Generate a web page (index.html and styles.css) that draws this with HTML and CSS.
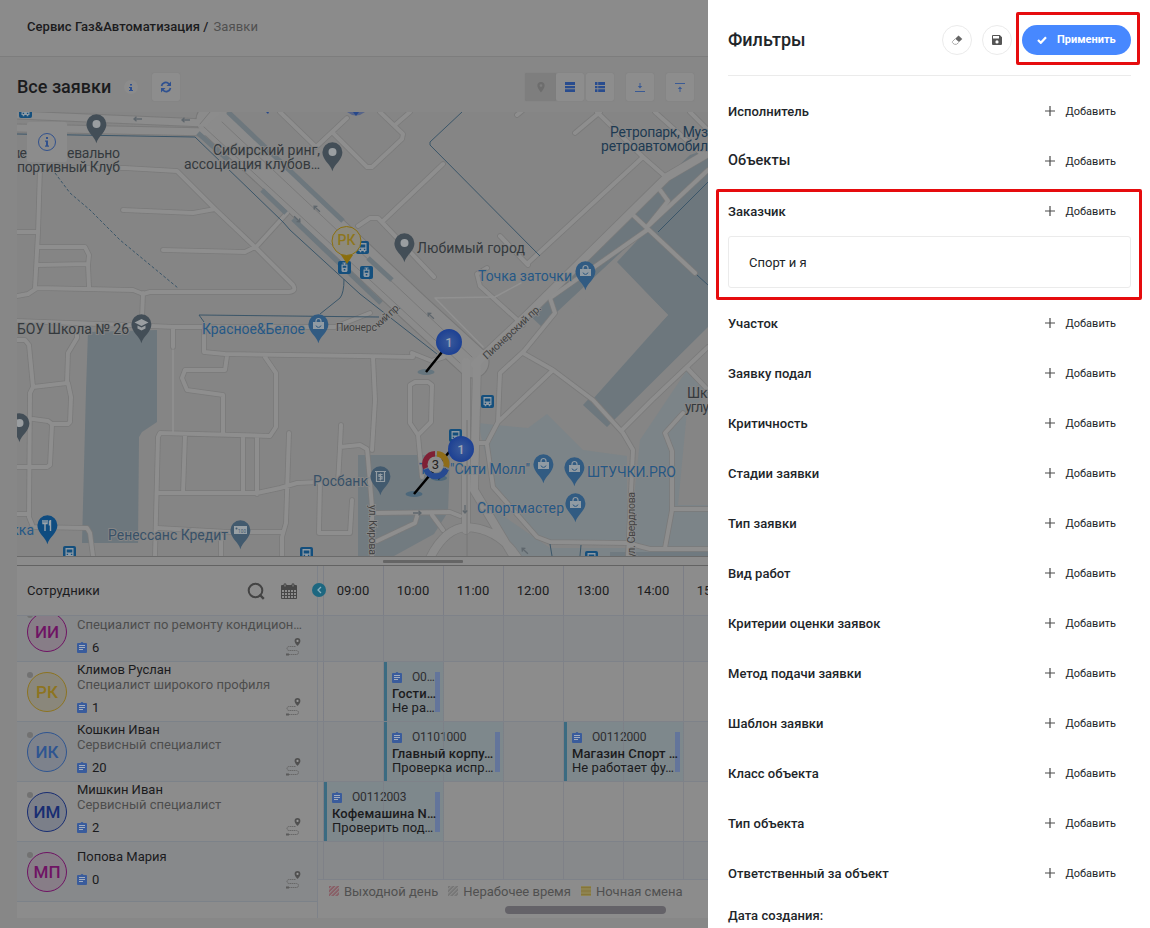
FILE: index.html
```html
<!DOCTYPE html>
<html lang="ru">
<head>
<meta charset="utf-8">
<title>Заявки</title>
<link rel="stylesheet" href="styles.css">
</head>
<body>
<svg class="defs" width="0" height="0">
  <defs>
    <symbol id="i-task" viewBox="0 0 10 11"><path fill="#3a5c9c" d="M1 1h2.6a1.5 1.5 0 0 1 2.8 0H9a1 1 0 0 1 1 1v8a1 1 0 0 1-1 1H1a1 1 0 0 1-1-1V2a1 1 0 0 1 1-1z"/><path stroke="#a3adbd" d="M2 3.5h6M2 5.5h6M2 7.5h4"/></symbol>
    <symbol id="i-route" viewBox="0 0 16 18"><path fill="none" stroke="#676767" stroke-dasharray="1.6 .5" d="M9.5 8.5H3a2 2 0 0 0 0 4h7.500a2 2 0 0 1 0 4H1.500"/><path fill="#505050" d="M11.500 0a2.900 2.900 0 0 1 2.900 2.900c0 2-2.900 5-2.900 5s-2.900-3-2.900-5A2.900 2.900 0 0 1 11.500 0z"/><circle cx="11.500" cy="2.900" r="1.100" fill="#999"/><rect y="15.500" width="3" height="2" fill="#5b5b5b"/></symbol>
    <symbol id="i-plus" viewBox="0 0 10 10"><path stroke="#4b4b4b" stroke-width="1.200" d="M5 0v10M0 5h10"/></symbol>
    <g id="pin"><path transform="translate(.4 .2)" d="M0 19C-1.500 12-10 8-10 0a10 10 0 0 1 20 0C10 8 1.500 12 0 19z"/></g>
    <g id="bag" fill="#919ba3"><path d="M-5-2H6v7H-5z"/><path d="M-2-1v-2a2.500 2.500 0 0 1 5 0v2" fill="none" stroke="#919ba3" stroke-width="1.200"/><path d="M-2 1.500a2.600 2.600 0 0 0 5 0" fill="none" stroke="#315b82"/></g>
    <g id="stop"><rect x="-6.500" y="-6.500" width="13" height="13" rx="2" fill="#144f7d"/><path fill="#8e9aa4" d="M-4-4.500h8v8h-1.200v1.200H1.200V3.500h-2.400v1.200h-1.600V3.500H-4z"/><path fill="#144f7d" d="M-2.800-3h5.600v3h-5.600zM-2.800 1.200h1.400v1.200h-1.400zM1.400 1.200h1.400v1.200H1.400z"/></g>
    <g id="tram"><rect x="-6.500" y="-6.500" width="13" height="13" rx="2" fill="#144f7d"/><path fill="#8e9aa4" d="M-2-5h4v1H.5v1H3v6.500L2 4.500H-2L-3 3.500V-3h2.500v-1H-2z"/><path fill="#144f7d" d="M-1.800-1.800h3.600v2h-3.600zM-.8 1.500h1.600v1.400H-.8z"/></g>
    <g id="arrow"><path fill="none" stroke="#5f676d" stroke-width="1.300" d="M-4 0h8M-1.500-2.200L-4 0l2.500 2.200"/></g>
    <radialGradient id="ball"><stop offset="0" stop-color="#3a5a9c"/><stop offset=".6" stop-color="#294b95"/><stop offset="1" stop-color="#1c4094"/></radialGradient>
    <g id="roads">
      <path d="M17 232h21M40 168l-2 65-3 55M40 168h85l52 3 38 38 40 38 38 38q4 6-4 7H150l-7 2-10-4-96-2-9 6-11 2M123 210l70 3 22-4M163 250l82 2 12-6 30-33M38 247h47l4 8-1 10 1 22M38 265l50-1M17 321l110 4 48 2h160l35-14M143 293l-1 26M173 327v20M204 328v24l21 2 135 2 53 1-1-4 20 8 12-4M227 356l-2 14h-40l-3 8 5 12 36 5v38M265 357l11 16v54l-6 9-110-3-2 4-3 119M185 435l-2 58M243 437v56M257 437v57M158 493h99l23-5 17-5 23-1-1 51h31l2-33M289 433l-3 90-4 14v19M158 528l70 4h54M221 536v20M341 425l-1 22-2 36M340 447l20-2 7 4 1 10 4 48v49"/>
      <path d="M17 340h8l4 5 4 42-3 6-1 124 4 10 54 1 3 5 3 23M33 387l34-4 1-30 9-15v-10M68 383l3 14-1 25-2 2H52l-4-3-15-2M52 425l-2 40-3 2H17M17 514h12"/>
      <path d="M347 118l-31 29-36-35M333 133l17 17 17 17h5l30-28 1-5-23-22M395 125l15-13M443 164l-60 57M358 226l12-8h8l56 59M500 236l28 29M487 268l-10 6 3 12 43 39M528 263L643 157l-46-45M575 133l25-21M643 157l24 21M655 112l48 43M690 112l18 18M517 115l6-5M660 190l8 11-21 26 61-57M647 230l-97 68 5 15-31 38-24 22-2 49-11 21h-8M523 353l30 17 40 30 30 33 10 17-5 106M553 370l-55 52M708 347l-56 53-30 30M687 368l21 22M683 413l-18 20 7 18v59l-7 38M672 509h36M487 445l6 42 44 50 13 5 77 1 23 6h58M633 215l62 58"/>
      <path d="M373 357l2 43-3 50M410 423v-38l5-3h13l4 3-1 37-13 13-8-12M418 435l4 42M377 513l73-1 10 4M418 513l-3 10-38 18M432 515l11 15"/>
    </g>
    <g id="avenues">
      <path d="M708 153l-41 24-142 140-50 47M466 362v168M477 364l-3 126 40 67M430 558q15-30 37-31 32 2 50 30"/>
    </g>
    <pattern id="h-red" width="2.800" height="2.800" patternUnits="userSpaceOnUse" patternTransform="rotate(45)"><path d="M1 0v4" stroke="#88505a" stroke-width="1.400"/></pattern>
    <pattern id="h-grey" width="2.800" height="2.800" patternUnits="userSpaceOnUse" patternTransform="rotate(45)"><path d="M1 0v4" stroke="#6f6f6f" stroke-width="1.400"/></pattern>
  </defs>
</svg>

<div class="app">
  <main class="page">
    <header class="crumbs"><b>Сервис Газ&amp;Автоматизация /</b><span>Заявки</span></header>

    <div class="titlebar">
      <h1>Все заявки</h1>
      <span class="hint"><svg width="4" height="7"><path fill="#2c4f91" d="M1 0h2v1.600H1zM0 3h3v3h1v1H0V6h1V4H0z"/></svg></span>
      <span class="btn btn-refresh"><svg width="12" height="12" viewBox="0 0 12 12"><path fill="none" stroke="#2f5190" stroke-width="1.700" d="M1.500 5A4.300 4.300 0 0 1 9 3M10.500 7A4.300 4.300 0 0 1 3 9"/><path fill="#2f5190" d="M11 .5v4.500H6.500zM1 11.500V7h4.500z"/></svg></span>
      <div class="tools">
        <span class="btn btn-off"><svg width="8" height="11" viewBox="0 0 8 11"><path fill="#6d6d6d" fill-rule="evenodd" d="M4 0a3.600 3.600 0 0 1 3.600 3.600C7.600 6.500 4 10.500 4 10.500S.4 6.500.4 3.600A3.600 3.600 0 0 1 4 0zm0 2.200a1.400 1.400 0 1 0 0 2.800 1.400 1.400 0 0 0 0-2.800z"/></svg></span>
        <span class="btn"><svg width="10" height="10"><path fill="#294c8e" d="M0 0h10v3H0zM0 4h10v2.300H0zM0 7.300h10V10H0z"/></svg></span>
        <span class="btn btn-gap"><svg width="10" height="10"><path fill="#294c8e" d="M0 0h2.500v3H0zM3.200 0H10v3H3.200zM0 4h2.500v2.300H0zM3.200 4H10v2.300H3.200zM0 7.300h2.500V10H0zM3.200 7.300H10V10H3.200z"/></svg></span>
        <span class="btn btn-far"><svg width="10" height="9"><path fill="#3a5a95" d="M0 8h10v1H0zM4.500 0h1v3h1.700L5 5.600 2.800 3h1.700z"/></svg></span>
        <span class="btn btn-far"><svg width="10" height="9"><path fill="#3a5a95" d="M0 0h10v1H0zM4.500 9h1V6h1.700L5 3.400 2.800 6h1.700z"/></svg></span>
      </div>
    </div>

    <div class="map">
      <svg width="691" height="444" viewBox="17 112 691 444">
        <rect x="17" y="112" width="691" height="444" fill="#858585"/>
        <g fill="#6d777d">
          <path d="M88 332l69-2v92l-15 10-3 5-1 106H82l4-153z"/>
          <path d="M690 155l18-6v22l-150 140-16 16-17-16 15-15z"/>
          <path d="M617 262l30-32 61-57v154L607 427l-24-22 85-90z"/>
          <path d="M358 455h92l-2 57-14 22-40 22h-36z" fill="#727b80"/>
        </g>
        <path fill="#858585" d="M617 263l51 52-75 84-50-50z"/>
        <g fill="#7c8488">
          <path d="M478 423l18 2 32 3 19-14 36 36 44 6v87h-77l-13-6-44-50z"/>
          <path d="M640 440l47-70 21 21v165h-80z"/>
          <path d="M480 500l30 56h198v-8H550z"/>
        </g>
        <path fill="#707a80" d="M610 552h98v4h-98z"/>
        <path fill="#858585" d="M687 411l21-16v110h-30z"/>
        <g fill="none" stroke-linejoin="round" stroke-linecap="round">
          <use href="#roads" stroke="#7a7a7a" stroke-width="5.600"/>
          <path d="M17 115l188 8M17 128l193 4M205 122l14-12" stroke="#7a7a7a" stroke-width="9"/>
          <path d="M212 120L345 243l68 64 60 55" stroke="#777" stroke-width="33"/>
          <use href="#avenues" stroke="#7a7a7a" stroke-width="9.500"/>
          <path d="M212 120L345 243l68 64 60 55" stroke="#8b8b8b" stroke-width="31"/>
          <path d="M17 115l188 8M17 128l193 4M205 122l14-12" stroke="#8c8c8c" stroke-width="7"/>
          <use href="#roads" stroke="#8e8e8e" stroke-width="4"/>
          <use href="#avenues" stroke="#8d8d8d" stroke-width="8"/>
          <path d="M173 350v82M521 283l-26 14-60 1 48 49" stroke="#919191" stroke-width="1.500"/>
          <path d="M204 127l256 236M222 122l250 235M210 112l-10 12" stroke="#7a7a7a"/>
        </g>
        <path d="M228 112l115 109M368 258l24 22M198 133l30 27M262 190l24 23M293 219l88 84" stroke="#6d777d" stroke-width="5" fill="none"/>
        <g fill="none" stroke="#3b5669">
          <path d="M17 134l178 3 88 85 7 8 70 64 77 60M199 315l180 2M199 315l5 7M344 279q0 14-4 19l-20 16M462 112l-32 30v3l110 111M658 232l50-50M697 275l11 10M550 544l2 12M581 545l-1 11"/>
          <path d="M55 173l15 20 20 17 30 30 58 48" stroke-dasharray="3 2"/>
        </g>
        <path d="M467 420v136" stroke="#767676"/>
        <use href="#arrow" x="138" y="119"/><use href="#arrow" x="186" y="120"/>
        <use href="#arrow" transform="translate(297 219) rotate(223)"/><use href="#arrow" transform="translate(317 209) rotate(43)"/>
        <use href="#arrow" transform="translate(431 316) rotate(43)"/><use href="#arrow" transform="translate(417 513) rotate(180)"/>
        <use href="#arrow" transform="translate(465 509) rotate(270)"/><use href="#arrow" transform="translate(525 551) rotate(43)"/>
        <use href="#stop" x="25.500" y="111.500"/><use href="#stop" x="362.500" y="247.500"/><use href="#tram" x="366.500" y="272.500"/>
        <use href="#stop" x="487.500" y="401.500"/><use href="#stop" x="455.500" y="435.500"/><use href="#stop" x="69.500" y="552.500"/>
        <use href="#stop" x="306.500" y="553.500"/><use href="#stop" x="591.500" y="557.500"/><use href="#tram" x="344.500" y="267.500"/>
        <g fill="#434e57">
          <use href="#pin" x="96" y="124"/><use href="#pin" x="332" y="152"/><use href="#pin" x="404" y="243"/><use href="#pin" x="141" y="324"/><use href="#pin" x="19" y="423"/>
        </g>
        <g fill="#9a9ea1"><circle cx="96.500" cy="124" r="4"/><circle cx="332.500" cy="152" r="4"/><circle cx="404.500" cy="243" r="4"/><circle cx="19.500" cy="423" r="4"/><path d="M141.500 319l7 3.500-7 3.500-7-3.500zM137.500 325.500l4 2 4-2v3l-4 2-4-2z"/></g>
        <g fill="#315b82">
          <use href="#pin" x="318" y="324"/><use href="#pin" x="585" y="271"/><use href="#pin" x="543" y="464"/><use href="#pin" x="574" y="467"/><use href="#pin" x="575" y="503"/>
          <use href="#pin" x="47" y="525" fill="#0f4c80"/><use href="#pin" x="240" y="530" fill="#425a6e"/><use href="#pin" x="380" y="476" fill="#425a6e"/>
        </g>
        <use href="#bag" x="318" y="324"/><use href="#bag" x="585" y="271"/><use href="#bag" x="543" y="464"/><use href="#bag" x="574" y="467"/><use href="#bag" x="575" y="503"/>
        <path fill="none" stroke="#9aa3aa" stroke-width="1.400" d="M43 520v3.500h4V520M45 520v11M50.500 520v11M49.500 520.500v5"/>
        <path fill="#98a0a5" d="M234 526h13v8h-13z"/><circle cx="236.500" cy="528.500" r="1" fill="#425a6e"/>
        <text x="238" y="533" class="note" textLength="8">100</text>
        <path fill="none" stroke="#949da3" stroke-width="1.200" d="M375 471.500h11M376.500 472v9.500h8V472M382.500 474.500h-3.500v2h3v2.500h-3.500M380.500 473.500v7"/>
        <ellipse cx="426" cy="372" rx="8.500" ry="3" fill="#65757e"/><ellipse cx="414" cy="494" rx="8.500" ry="3" fill="#4d687b"/><ellipse cx="439" cy="478" rx="8" ry="3" fill="#4d687b"/>
        <g class="lbl lbl-grey">
          <text x="17" y="158" textLength="10">ие</text>
          <text x="67" y="158" textLength="53">евально</text>
          <text x="17" y="172" textLength="103">портивный Клуб</text>
          <text x="213" y="155" textLength="107">Сибирский ринг,</text>
          <text x="184" y="169" textLength="136">ассоциация клубов…</text>
          <text x="417" y="253" textLength="108">Любимый город</text>
          <text x="17" y="334" textLength="112">БОУ Школа № 26</text>
          <text x="687" y="398" textLength="20.500">Шк</text>
          <text x="685" y="412" textLength="24">углу</text>
        </g>
        <g class="lbl lbl-navy">
          <text x="610" y="137" textLength="98">Ретропарк, Муз</text>
          <text x="601" y="151" textLength="107">ретроавтомобил</text>
        </g>
        <g class="lbl lbl-blue">
          <text x="202" y="334" textLength="103">Красное&amp;Белое</text>
          <text x="478" y="281" textLength="94">Точка заточки</text>
          <text x="419" y="474">Т</text>
          <text x="450" y="474" textLength="80">"Сити Молл"</text>
          <text x="587" y="477" textLength="89">ШТУЧКИ.PRO</text>
          <text x="477" y="513" textLength="87">Спортмастер</text>
          <text x="34" y="535" text-anchor="end">кка</text>
        </g>
        <g class="lbl lbl-bank">
          <text x="313" y="486" textLength="55">Росбанк</text>
          <text x="108" y="540" textLength="120">Ренессанс Кредит</text>
        </g>
        <g class="street">
          <text x="336" y="331" textLength="41">Пионерс</text>
          <text transform="translate(379 328) rotate(-43)" textLength="30">кий пр.</text>
          <text transform="translate(487 360) rotate(-43)" textLength="75">Пионерский пр.</text>
          <text transform="translate(369 505) rotate(90)" textLength="50">ул. Кирова</text>
          <text transform="translate(635 558) rotate(-90)" textLength="66">ул. Свердлова</text>
        </g>
        <g stroke="#000" stroke-width="2.500"><path d="M426 372l16-20M414 494l46-55M438 479l8-10"/></g>
        <circle cx="449" cy="342" r="13" fill="url(#ball)"/><circle cx="461" cy="449" r="13" fill="url(#ball)"/>
        <text x="449" y="347" class="num">1</text><text x="461" y="454" class="num">1</text>
        <g fill="none" stroke-width="6"><path stroke="#7f2035" d="M426 468a10 10 0 0 1 9-14"/><path stroke="#8e6c18" d="M437 454a10 10 0 0 1 9 13"/><path stroke="#274a91" d="M446 469a10.500 10.500 0 0 1-20 0"/></g>
        <circle cx="435.500" cy="464.500" r="8" fill="#8c8c8c"/><text x="435.500" y="469" class="num num-dark">3</text>
        <path fill="#8b6e0c" d="M341 255h12l-6 9z"/><circle cx="346.500" cy="241" r="14.500" fill="#8d8a7d" stroke="#8b700f"/>
        <text x="346.500" y="245" class="badge">РК</text>
        <path fill="#566489" d="M347 112h18q-9 7-18 0z"/><path fill="#27488b" d="M353 112h6l-3 4zM266 112h3l-1 2z"/>
        <g><rect x="27" y="122" width="40" height="40" rx="2" fill="#8c8c8c"/><circle cx="47" cy="142" r="8.500" fill="none" stroke="#31518d"/><path fill="#31518d" d="M46 137h2v2h-2zM45 140.500h3v5h1v1.200h-4v-1.200h1v-3.800h-1z"/></g>
      </svg>
    </div>
    <div class="splitter"><i></i></div>

    <section class="board">
      <div class="staff">
        <div class="staff-head"><span>Сотрудники</span>
          <svg width="18" height="18" viewBox="0 0 18 18"><circle cx="8.500" cy="8.500" r="6.800" fill="none" stroke="#444" stroke-width="2"/><path stroke="#444" stroke-width="2.400" d="M12.500 12.500l4.300 4.300"/></svg>
          <svg width="16" height="16" viewBox="0 0 16 16"><path fill="none" stroke="#474747" d="M.5 2.500h15v13H.5zM.5 6.500h15M.5 9.500h15M.5 12.500h15M3.500 6v9.500M6.500 6v9.500M9.500 6v9.500M12.500 6v9.500"/><path fill="#474747" d="M1 3h14v3H1z"/><path stroke="#474747" stroke-width="3" stroke-linecap="round" d="M4 1.800v1.500M12 1.800v1.500"/><path stroke="#8c8c8c" d="M4 1.500v2M12 1.500v2"/></svg>
        </div>
        <div class="people">
          <div class="person tint first"><span class="ava a-mag">ИИ</span><div class="who"><b></b><em>Специалист по ремонту кондицион…</em><span class="cnt"><svg width="10" height="11"><use href="#i-task"/></svg>6</span></div><svg class="route" width="16" height="18"><use href="#i-route"/></svg></div>
          <div class="person"><span class="ava a-yel">РК</span><div class="who"><b>Климов Руслан</b><em>Специалист широкого профиля</em><span class="cnt"><svg width="10" height="11"><use href="#i-task"/></svg>1</span></div><svg class="route" width="16" height="18"><use href="#i-route"/></svg></div>
          <div class="person tint"><span class="ava a-blue">ИК</span><div class="who"><b>Кошкин Иван</b><em>Сервисный специалист</em><span class="cnt"><svg width="10" height="11"><use href="#i-task"/></svg>20</span></div><svg class="route" width="16" height="18"><use href="#i-route"/></svg></div>
          <div class="person"><span class="ava a-navy">ИМ</span><div class="who"><b>Мишкин Иван</b><em>Сервисный специалист</em><span class="cnt"><svg width="10" height="11"><use href="#i-task"/></svg>2</span></div><svg class="route" width="16" height="18"><use href="#i-route"/></svg></div>
          <div class="person tint solo"><span class="ava a-mag">МП</span><div class="who"><b>Попова Мария</b><span class="cnt"><svg width="10" height="11"><use href="#i-task"/></svg>0</span></div><svg class="route" width="16" height="18"><use href="#i-route"/></svg></div>
        </div>
      </div>
      <div class="time">
        <div class="hours"><span>09:00</span><span>10:00</span><span>11:00</span><span>12:00</span><span>13:00</span><span>14:00</span><span>15:00</span></div>
        <div class="lane lane-first tint"></div>
        <div class="lane"><div class="job s2 w1"><span class="no"><svg width="10" height="11"><use href="#i-task"/></svg><i>О0…</i></span><b>Гости…</b><em>Не ра…</em></div></div>
        <div class="lane tint"><div class="job s2 w2"><span class="no"><svg width="10" height="11"><use href="#i-task"/></svg><i>О1101000</i></span><b>Главный корпу…</b><em>Проверка испр…</em></div><div class="job s5 w2"><span class="no"><svg width="10" height="11"><use href="#i-task"/></svg><i>О0112000</i></span><b>Магазин Спорт …</b><em>Не работает фу…</em></div></div>
        <div class="lane"><div class="job s1 w2"><span class="no"><svg width="10" height="11"><use href="#i-task"/></svg><i>О0112003</i></span><b>Кофемашина N…</b><em>Проверить под…</em></div></div>
        <div class="lane lane-last tint"></div>
        <div class="legend">
          <svg width="10" height="10"><rect width="10" height="10" fill="url(#h-red)"/></svg><span class="l1">Выходной день</span>
          <svg width="10" height="10"><rect width="10" height="10" fill="url(#h-grey)"/></svg><span class="l2">Нерабочее время</span>
          <svg width="10" height="10"><rect width="10" height="10" fill="#8e834f"/><path stroke="#85753a" d="M0 1.500h10M0 5h10M0 8.500h10"/></svg><span class="l3">Ночная смена</span>
        </div>
        <div class="scroll"></div>
      </div>
      <span class="collapse"><svg width="5" height="8"><path d="M4 1L1 4l3 3" fill="none" stroke="#8ab0bd" stroke-width="1.300"/></svg></span>
    </section>
  </main>

  <aside class="filters">
    <header class="f-head">
      <h2>Фильтры</h2>
      <span class="round"><svg width="12" height="12" viewBox="0 0 12 12"><path fill="#666" d="M7.500 1.500l3.800 3.500-3.300 3L4.200 4.700z"/><path fill="none" stroke="#aaa" d="M4 5L1.500 7.500q-.5 1 .5 1.800l1.500 1h2L7.700 8.500"/></svg></span>
      <span class="round"><svg width="10" height="10"><path fill="#555" fill-rule="evenodd" d="M1 0h6.800L10 2.200V9a1 1 0 0 1-1 1H1a1 1 0 0 1-1-1V1a1 1 0 0 1 1-1zm0 1v2.400h6V1zm4 4.300a1.600 1.600 0 1 0 0 3.200 1.600 1.600 0 0 0 0-3.200z"/></svg></span>
      <span class="apply"><svg width="10" height="8"><path d="M1 4l2.800 2.800L9 1.200" fill="none" stroke="#fff" stroke-width="2.200"/></svg>Применить</span>
    </header>
    <div class="f-row"><b>Исполнитель</b><span><svg width="10" height="10"><use href="#i-plus"/></svg>Добавить</span></div>
    <div class="f-row big"><b>Объекты</b><span><svg width="10" height="10"><use href="#i-plus"/></svg>Добавить</span></div>
    <div class="f-row"><b>Заказчик</b><span><svg width="10" height="10"><use href="#i-plus"/></svg>Добавить</span></div>
    <div class="f-value">Спорт и я</div>
    <div class="f-row"><b>Участок</b><span><svg width="10" height="10"><use href="#i-plus"/></svg>Добавить</span></div>
    <div class="f-row"><b>Заявку подал</b><span><svg width="10" height="10"><use href="#i-plus"/></svg>Добавить</span></div>
    <div class="f-row"><b>Критичность</b><span><svg width="10" height="10"><use href="#i-plus"/></svg>Добавить</span></div>
    <div class="f-row"><b>Стадии заявки</b><span><svg width="10" height="10"><use href="#i-plus"/></svg>Добавить</span></div>
    <div class="f-row"><b>Тип заявки</b><span><svg width="10" height="10"><use href="#i-plus"/></svg>Добавить</span></div>
    <div class="f-row"><b>Вид работ</b><span><svg width="10" height="10"><use href="#i-plus"/></svg>Добавить</span></div>
    <div class="f-row"><b>Критерии оценки заявок</b><span><svg width="10" height="10"><use href="#i-plus"/></svg>Добавить</span></div>
    <div class="f-row"><b>Метод подачи заявки</b><span><svg width="10" height="10"><use href="#i-plus"/></svg>Добавить</span></div>
    <div class="f-row"><b>Шаблон заявки</b><span><svg width="10" height="10"><use href="#i-plus"/></svg>Добавить</span></div>
    <div class="f-row"><b>Класс объекта</b><span><svg width="10" height="10"><use href="#i-plus"/></svg>Добавить</span></div>
    <div class="f-row"><b>Тип объекта</b><span><svg width="10" height="10"><use href="#i-plus"/></svg>Добавить</span></div>
    <div class="f-row"><b>Ответственный за объект</b><span><svg width="10" height="10"><use href="#i-plus"/></svg>Добавить</span></div>
    <div class="f-date">Дата создания:</div>
  </aside>
  <div class="mark mark-apply"></div>
  <div class="mark mark-client"></div>
</div>
</body>
</html>
```

FILE: styles.css
```css
* { box-sizing: border-box; }
body { margin: 0; font-family: Roboto, "Liberation Sans", sans-serif; font-size: 13px; }
svg { display: block; flex: none; }
h1, h2 { margin: 0; font-weight: 500; }
em, i { font-style: normal; }
.defs { position: absolute; }
.app { position: relative; display: flex; width: 1150px; height: 928px; overflow: hidden; }

.page { width: 708px; height: 928px; background: #878787; color: #1b1b1d; overflow: hidden; display: flex; flex-direction: column; }
.crumbs { height: 57px; flex: none; padding: 19px 27px 0; border-bottom: 1px solid #7d7d7d; background: #8b8b8b; line-height: 16px; letter-spacing: .05px; display: flex; gap: 5px; }
.crumbs b { font-weight: 500; }
.crumbs span { color: #505050; letter-spacing: .15px; }
.titlebar { height: 55px; flex: none; display: flex; align-items: center; padding: 5px 14px 0 17px; }
h1 { font-size: 18px; width: 107px; white-space: nowrap; padding-bottom: 1px; }
.hint { width: 14px; height: 14px; border-radius: 50%; background: #8c8c8c; display: grid; place-items: center; }
.btn { width: 28px; height: 28px; border-radius: 2px; background: #8d8d8d; box-shadow: 0 0 1px #777; display: grid; place-items: center; }
.btn-refresh { margin-left: 14px; }
.tools { display: flex; margin-left: auto; }
.btn-off { width: 31px; background: #7e7e7e; }
.btn-gap { margin-left: 2px; }
.btn-far { margin-left: 12px; }

.map { height: 444px; flex: none; margin-left: 17px; }
.lbl { font-size: 14px; stroke: #858585; stroke-width: 2px; paint-order: stroke; }
.lbl-grey { fill: #34393d; }
.lbl-navy { fill: #1d3a52; }
.lbl-blue { fill: #255885; }
.lbl-bank { fill: #385168; }
.street { font-size: 10.5px; fill: #424242; stroke: #8b8b8b; stroke-width: 1.5px; paint-order: stroke; }
.note { font-size: 4.5px; fill: #425a6e; }
.num { font-size: 13px; font-weight: 500; fill: #9ba3b3; text-anchor: middle; }
.num-dark { fill: #222; font-weight: 400; }
.badge { font-size: 14px; font-weight: 500; fill: #8d761d; text-anchor: middle; }
.splitter { height: 10px; flex: none; margin-left: 17px; background: #8c8c8c; border-top: 1px solid #6a6a6a; border-bottom: 1px solid #636363; display: flex; padding: 3px 0 0 366px; }
.splitter i { width: 80px; height: 3px; border-radius: 1px; background: #656565; }

.board { position: relative; display: flex; height: 352px; flex: none; margin-left: 17px; background: #8c8c8c; }
.staff { width: 301px; border-right: 1px solid #7e8289; flex: none; }
.staff-head { height: 50px; display: flex; align-items: center; padding: 0 20px 0 10px; border-bottom: 1px solid #7e8289; }
.staff-head svg { margin-left: 16px; }
.staff-head span { margin-right: auto; letter-spacing: .05px; }
.people { overflow: hidden; }
.person { display: flex; height: 60px; padding: 0 15px 0 10px; border-bottom: 1px solid #7c8289; position: relative; }
.tint { background: #87898b; }
.first { margin-top: -14px; }
.ava { width: 40px; height: 40px; margin: 10px 10px 0 0; border: 1px solid; border-radius: 50%; display: grid; place-items: center; font-size: 17px; font-weight: 500; flex: none; }
.ava::before { content: ""; position: absolute; left: 10px; top: 10px; width: 6px; height: 6px; border-radius: 50%; background: #727272; }
.a-mag { color: #6f1364; background: #877d87; }
.a-yel { color: #8d7420; background: #8a877b; }
.a-blue { color: #2f5591; background: #7d828c; }
.a-navy { color: #182d72; background: #7b7f89; }
.who { display: flex; flex-direction: column; line-height: 15px; white-space: nowrap; flex: 1; min-width: 0; }
.who b { font-weight: 400; min-height: 15px; }
.who em { color: #4d4d4d; }
.cnt { display: flex; align-items: center; gap: 5px; margin-top: 8px; }
.solo b { margin-top: 7px; }
.route { margin-top: 36px; }
.solo .route { margin-top: 29px; }

.time { flex: 1; overflow: hidden; background: linear-gradient(#7d8087, #7d8087) 5px 0 / 1px 313px no-repeat; }
.hours { height: 50px; border-bottom: 1px solid #7e8289; padding-left: 5px; display: grid; grid-template-columns: repeat(7, 60px); background: repeating-linear-gradient(90deg, transparent 0 59px, #7c7e86 59px 60px) 6px 0 no-repeat; }
.hours span { display: grid; place-items: center; }
.lane { position: relative; height: 60px; border-bottom: 1px solid #7e8289; padding-left: 6px; display: grid; grid-template-columns: repeat(7, 60px); }
.lane::after { content: ""; position: absolute; inset: 0 0 0 5px; background: repeating-linear-gradient(90deg, #7c7e86 0 1px, transparent 1px 60px); opacity: .75; }
.lane-first { height: 46px; }
.lane-last { height: 38px; }
.job { position: relative; grid-row: 1; height: 59px; background: #7e888c; border-left: 3px solid #3b6b81; padding: 8px 4px 0 5px; display: flex; flex-direction: column; line-height: 14px; white-space: nowrap; }
.job::after { content: ""; position: absolute; right: 4px; top: 10px; width: 5px; height: 40px; background: #63759b; }
.s1 { grid-column-start: 1; } .s2 { grid-column-start: 2; } .s5 { grid-column-start: 5; }
.w1 { grid-column-end: span 1; } .w2 { grid-column-end: span 2; }
.job b { font-weight: 500; position: relative; z-index: 1; margin-top: 3px; letter-spacing: .1px; }
.job em { position: relative; z-index: 1; letter-spacing: .05px; }
.no { display: flex; align-items: center; gap: 10px; font-size: 12px; color: #2e2e30; letter-spacing: -.15px; }
.legend { height: 24px; display: flex; align-items: center; padding: 0 0 2px 11px; gap: 5px; color: #505050; white-space: nowrap; }
.l1, .l2 { margin-right: 5px; }
.scroll { width: 161px; height: 8px; margin: 2px 0 0 187px; border-radius: 4px; background: #646268; }
.collapse { position: absolute; left: 295px; top: 17px; width: 14px; height: 14px; border-radius: 50%; background: #1d6780; display: grid; place-items: center; }

.filters { width: 442px; background: #fff; padding: 0 19px 0 20px; color: #212529; }
.f-head { height: 76px; display: flex; align-items: center; padding-top: 4px; border-bottom: 1px solid #ebebeb; margin-bottom: 10px; }
h2 { font-size: 18px; margin-right: auto; }
.round { width: 30px; height: 30px; border: 1px solid #ebebeb; border-radius: 50%; display: grid; place-items: center; margin-right: 10px; }
.apply { width: 109px; height: 30px; border-radius: 15px; background: #4788ff; color: #fff; display: flex; align-items: center; gap: 10px; padding-left: 15px; font-size: 11px; font-weight: 700; }
.f-row { height: 50px; display: flex; align-items: center; justify-content: space-between; padding-right: 15px; }
.f-row b { font-weight: 500; letter-spacing: .04px; }
.f-row.big b { font-size: 14.5px; padding-bottom: 2px; }
.f-row span { display: flex; align-items: center; gap: 10px; font-size: 11px; }
.f-value { height: 52px; margin-bottom: 10px; border: 1px solid #ebebeb; border-radius: 3px; display: flex; align-items: center; padding-left: 20px; }
.f-date { line-height: 16px; padding-top: 10px; font-weight: 500; letter-spacing: .04px; }
.mark { position: absolute; border: 3px solid #e60c0e; border-radius: 2px; }
.mark-apply { left: 1016px; top: 12px; width: 124px; height: 53px; }
.mark-client { left: 716px; top: 189px; width: 426px; height: 111px; }
```
